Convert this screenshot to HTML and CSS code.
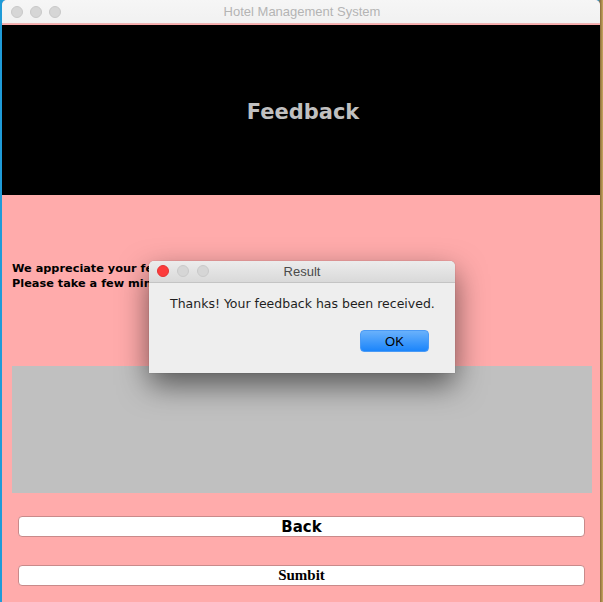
FILE: index.html
```html
<!DOCTYPE html>
<html>
<head>
<meta charset="utf-8">
<link rel="stylesheet" href="styles.css">
</head>
<body>
<div class="desktop">
  <div class="window">
    <div class="titlebar">
      <div class="lights">
        <span class="light"></span><span class="light"></span><span class="light"></span>
      </div>
      <div class="title">Hotel Management System</div>
    </div>
    <div class="content">
      <div class="header">Feedback</div>
      <div class="main">
        <div class="intro">
          <div>We appreciate your feedback!</div>
          <div>Please take a few minutes to share your experience.</div>
        </div>
        <div class="textarea"></div>
        <button class="btn btn-back">Back</button>
        <button class="btn btn-submit">Sumbit</button>
      </div>
    </div>
  </div>
  <div class="dialog">
    <div class="dlg-titlebar">
      <div class="lights dlg-lights">
        <span class="light red"></span><span class="light"></span><span class="light"></span>
      </div>
      <div class="dlg-title">Result</div>
    </div>
    <div class="dlg-body">
      <div class="dlg-msg">Thanks! Your feedback has been received.</div>
      <div class="dlg-actions"><button class="ok">OK</button></div>
    </div>
  </div>
</div>
</body>
</html>
```
FILE: styles.css
```css
html, body {
  margin: 0;
  padding: 0;
}
body {
  width: 603px;
  height: 602px;
  overflow: hidden;
  background: linear-gradient(90deg, #1f9bd8 0, #1f9bd8 2px, #2aa6de 3px, #2aa6de 598px, #8a6a3a 600px, #c9a860 603px);
}
.desktop {
  position: relative;
  width: 603px;
  height: 602px;
}
.window {
  margin-left: 2px;
  width: 598px;
  height: 602px;
  border-radius: 5px 5px 0 0;
  overflow: hidden;
  display: flex;
  flex-direction: column;
  background: #ffabab;
}
.titlebar {
  height: 23px;
  flex: none;
  background: linear-gradient(#f6f6f6, #f1f1f1);
  border-bottom: 1px solid #eeb4b4;
  position: relative;
  display: flex;
  align-items: center;
  justify-content: center;
}
.lights {
  position: absolute;
  left: 9px;
  top: 6px;
  display: flex;
  gap: 7px;
}
.light {
  width: 12px;
  height: 12px;
  border-radius: 50%;
  background: #d6d6d6;
  box-sizing: border-box;
  border: 1px solid #c9c9c9;
}
.light.red {
  background: #fc3c3c;
  border-color: #e23434;
}
.title {
  font-family: "Liberation Sans", Arial, sans-serif;
  font-size: 13px;
  color: #b4b4b4;
  margin-left: 2px;
}
.content {
  flex: 1;
  display: flex;
  flex-direction: column;
  padding-top: 1px;
}
.header {
  height: 170px;
  flex: none;
  background: #000;
  color: #c0c0c0;
  font-family: "DejaVu Sans", Verdana, sans-serif;
  font-weight: bold;
  font-size: 21px;
  display: flex;
  align-items: center;
  justify-content: center;
  padding-left: 4px;
  padding-top: 4px;
  box-sizing: border-box;
}
.main {
  padding: 0 8px 0 10px;
  display: flex;
  flex-direction: column;
}
.intro {
  margin-top: 66px;
  font-family: "DejaVu Sans", Verdana, sans-serif;
  font-weight: bold;
  font-size: 11.3px;
  line-height: 15px;
  color: #000;
}
.textarea {
  margin-top: 75px;
  height: 127px;
  background: #c0c0c0;
}
.btn {
  display: block;
  margin: 23px 7px 0 6px;
  height: 21px;
  padding: 0;
  background: #fff;
  border: 1px solid #c98a8a;
  border-radius: 4px;
  color: #000;
  font-weight: bold;
  line-height: 19px;
  text-align: center;
}
.btn-back {
  font-family: "DejaVu Sans", Verdana, sans-serif;
  font-size: 15px;
  padding-top: 1px;
}
.btn-submit {
  margin-top: 28px;
  font-family: "Liberation Serif", "Times New Roman", serif;
  font-size: 15px;
}
.dialog {
  position: absolute;
  left: 149px;
  top: 261px;
  width: 306px;
  height: 112px;
  border-radius: 5px 5px 0 0;
  background: #eeeeee;
  box-shadow: 0 12px 30px rgba(0, 0, 0, 0.55), 0 0 1px rgba(0, 0, 0, 0.4);
  overflow: hidden;
  display: flex;
  flex-direction: column;
}
.dlg-titlebar {
  height: 21px;
  flex: none;
  position: relative;
  background: linear-gradient(#ececec, #d9d9d9);
  border-bottom: 1px solid #c4c4c4;
  display: flex;
  align-items: center;
  justify-content: center;
}
.dlg-lights {
  left: 8px;
  top: 4px;
  gap: 8px;
}
.dlg-title {
  font-family: "Liberation Sans", Arial, sans-serif;
  font-size: 13px;
  color: #4a4a4a;
}
.dlg-body {
  flex: 1;
  display: flex;
  flex-direction: column;
  padding: 13px 20px 0 21px;
}
.dlg-msg {
  font-family: "DejaVu Sans", Verdana, sans-serif;
  font-size: 12.5px;
  line-height: 16px;
  color: #1e1e1e;
}
.dlg-actions {
  display: flex;
  justify-content: flex-end;
  margin: 18px 6px 0 0;
}
.ok {
  width: 69px;
  height: 22px;
  padding: 0;
  border: 1px solid #4a9af5;
  border-radius: 4px;
  background: linear-gradient(#69b1fb, #1b85fb);
  font-family: "Liberation Sans", Arial, sans-serif;
  font-size: 13px;
  color: #000;
}
```
